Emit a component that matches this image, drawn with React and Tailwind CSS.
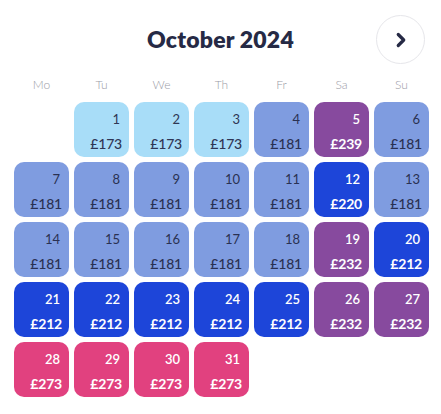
import { ChevronRight } from 'lucide-react';

const weekdays = ['Mo', 'Tu', 'We', 'Th', 'Fr', 'Sa', 'Su'];

const tones = {
  low: 'bg-[#a8ddf8] text-[#2f3654]',
  mid: 'bg-[#7f9ce0] text-[#2a3152]',
  high: 'bg-[#1d45d9] text-white',
  peak: 'bg-[#874a9e] text-white',
  top: 'bg-[#e1417f] text-white',
};

const prices = {
  low: '£173',
  mid: '£181',
  high: '£212',
  peak: '£232',
  top: '£273',
};

// October 2024 starts on a Tuesday
const days = [
  { d: 1, t: 'low' }, { d: 2, t: 'low' }, { d: 3, t: 'low' }, { d: 4, t: 'mid' },
  { d: 5, t: 'peak', p: '£239' }, { d: 6, t: 'mid' },
  { d: 7, t: 'mid' }, { d: 8, t: 'mid' }, { d: 9, t: 'mid' }, { d: 10, t: 'mid' },
  { d: 11, t: 'mid' }, { d: 12, t: 'high', p: '£220' }, { d: 13, t: 'mid' },
  { d: 14, t: 'mid' }, { d: 15, t: 'mid' }, { d: 16, t: 'mid' }, { d: 17, t: 'mid' },
  { d: 18, t: 'mid' }, { d: 19, t: 'peak' }, { d: 20, t: 'high' },
  { d: 21, t: 'high' }, { d: 22, t: 'high' }, { d: 23, t: 'high' }, { d: 24, t: 'high' },
  { d: 25, t: 'high' }, { d: 26, t: 'peak' }, { d: 27, t: 'peak' },
  { d: 28, t: 'top' }, { d: 29, t: 'top' }, { d: 30, t: 'top' }, { d: 31, t: 'top' },
];

const DayCell = ({ day }) => {
  const bold = day.t === 'high' || day.t === 'peak' || day.t === 'top';
  return (
    <button
      className={`h-[55px] rounded-[10px] flex flex-col items-end justify-between pt-[8px] pb-[4px] pr-[7px] ${tones[day.t]}`}
    >
      <span className={`mr-[2px] text-[13px] leading-[18px] ${bold ? 'font-semibold' : 'font-normal'}`}>{day.d}</span>
      <span className={`text-[14px] leading-[18px] tracking-[-0.2px] ${bold ? 'font-bold' : 'font-medium'}`}>
        {day.p || prices[day.t]}
      </span>
    </button>
  );
};

export default function App() {
  return (
    <div className="w-[441px] h-[414px] bg-white font-['Lato',sans-serif]">
      <div className="flex items-center justify-between pt-[15px] pl-[16px] pr-[16px]">
        <div className="w-[49px]" />
        <h1 className="text-[23px] font-extrabold text-[#262a45] tracking-[0.2px]">October 2024</h1>
        <button className="w-[49px] h-[49px] rounded-full border border-[#e6e6ea] flex items-center justify-center text-[#262a45]">
          <ChevronRight size={22} strokeWidth={3.5} />
        </button>
      </div>

      <div className="grid grid-cols-[repeat(7,55px)] gap-x-[5px] pl-[14px] mt-[13px] h-[16px]">
        {weekdays.map((w) => (
          <div key={w} className="text-center text-[12px] leading-[16px] font-light text-[#9a9ba6]">
            {w}
          </div>
        ))}
      </div>

      <div className="grid grid-cols-[repeat(7,55px)] gap-[5px] pl-[14px] mt-[9px]">
        <div />
        {days.map((day) => (
          <DayCell key={day.d} day={day} />
        ))}
      </div>
    </div>
  );
}
